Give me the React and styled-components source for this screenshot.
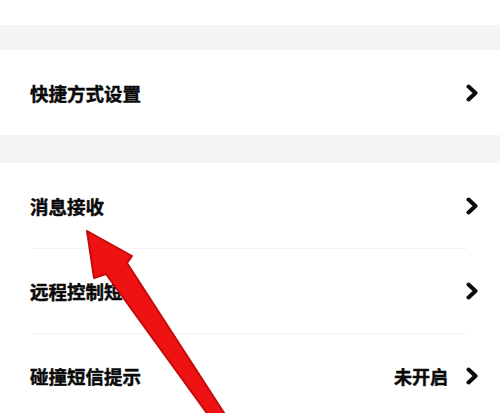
import React from 'react'
import styled, { createGlobalStyle } from 'styled-components'

const GlobalStyle = createGlobalStyle`
  html, body {
    margin: 0;
    padding: 0;
    background: #ffffff;
  }
  body {
    font-family: 'Noto Sans CJK SC', 'Noto Sans', sans-serif;
  }
`

const Page = styled.div`
  position: relative;
  width: 500px;
  height: 413px;
  overflow: hidden;
  background: #ffffff;
`

const TopSpace = styled.div`
  height: 25px;
  background: #ffffff;
`

const Gap = styled.div`
  height: ${(p) => p.h}px;
  background: #f4f3f6;
`

const Group = styled.div`
  background: #ffffff;
`

const Row = styled.div`
  height: ${(p) => p.h || 85}px;
  display: flex;
  align-items: center;
  justify-content: space-between;
  padding: 0 22px 0 30px;
  position: relative;

  & + &::before {
    content: '';
    position: absolute;
    top: 0;
    left: 33px;
    right: 33px;
    height: 1px;
    background: #f2f2f4;
  }
`

const Label = styled.span`
  font-size: 18.5px;
  font-weight: 700;
  color: #0a0a0a;
  -webkit-text-stroke: 0.45px #0a0a0a;
`

const Right = styled.div`
  display: flex;
  align-items: center;
  gap: 18px;
`

const Value = styled.span`
  font-size: 18px;
  font-weight: 700;
  color: #0a0a0a;
  -webkit-text-stroke: 0.45px #0a0a0a;
`

const ArrowLayer = styled.svg`
  position: absolute;
  left: 0;
  top: 0;
  pointer-events: none;
`

const Chevron = () => (
  <svg width="12" height="18" viewBox="0 0 12 18">
    <path
      d="M2.5 2.5 L9.5 9 L2.5 15.5"
      fill="none"
      stroke="#0a0a0a"
      strokeWidth="4"
      strokeLinecap="round"
      strokeLinejoin="round"
    />
  </svg>
)

const items = [
  { label: '消息接收' },
  { label: '远程控制短信' },
  { label: '碰撞短信提示', value: '未开启' },
]

export default function App() {
  return (
    <Page>
      <GlobalStyle />
      <TopSpace />
      <Gap h={25} />
      <Group>
        <Row>
          <Label>快捷方式设置</Label>
          <Chevron />
        </Row>
      </Group>
      <Gap h={28} />
      <Group>
        {items.map((it) => (
          <Row key={it.label}>
            <Label>{it.label}</Label>
            <Right>
              {it.value && <Value>{it.value}</Value>}
              <Chevron />
            </Right>
          </Row>
        ))}
      </Group>
      <ArrowLayer width="500" height="413" viewBox="0 0 500 413">
        <path
          d="M87 231 L132 256 L127 263 L226 416 L209 416 L106 274 L94 278 Z"
          fill="#ee1212"
          stroke="#c40a0a"
          strokeWidth="2"
          strokeLinejoin="round"
        />
      </ArrowLayer>
    </Page>
  )
}
